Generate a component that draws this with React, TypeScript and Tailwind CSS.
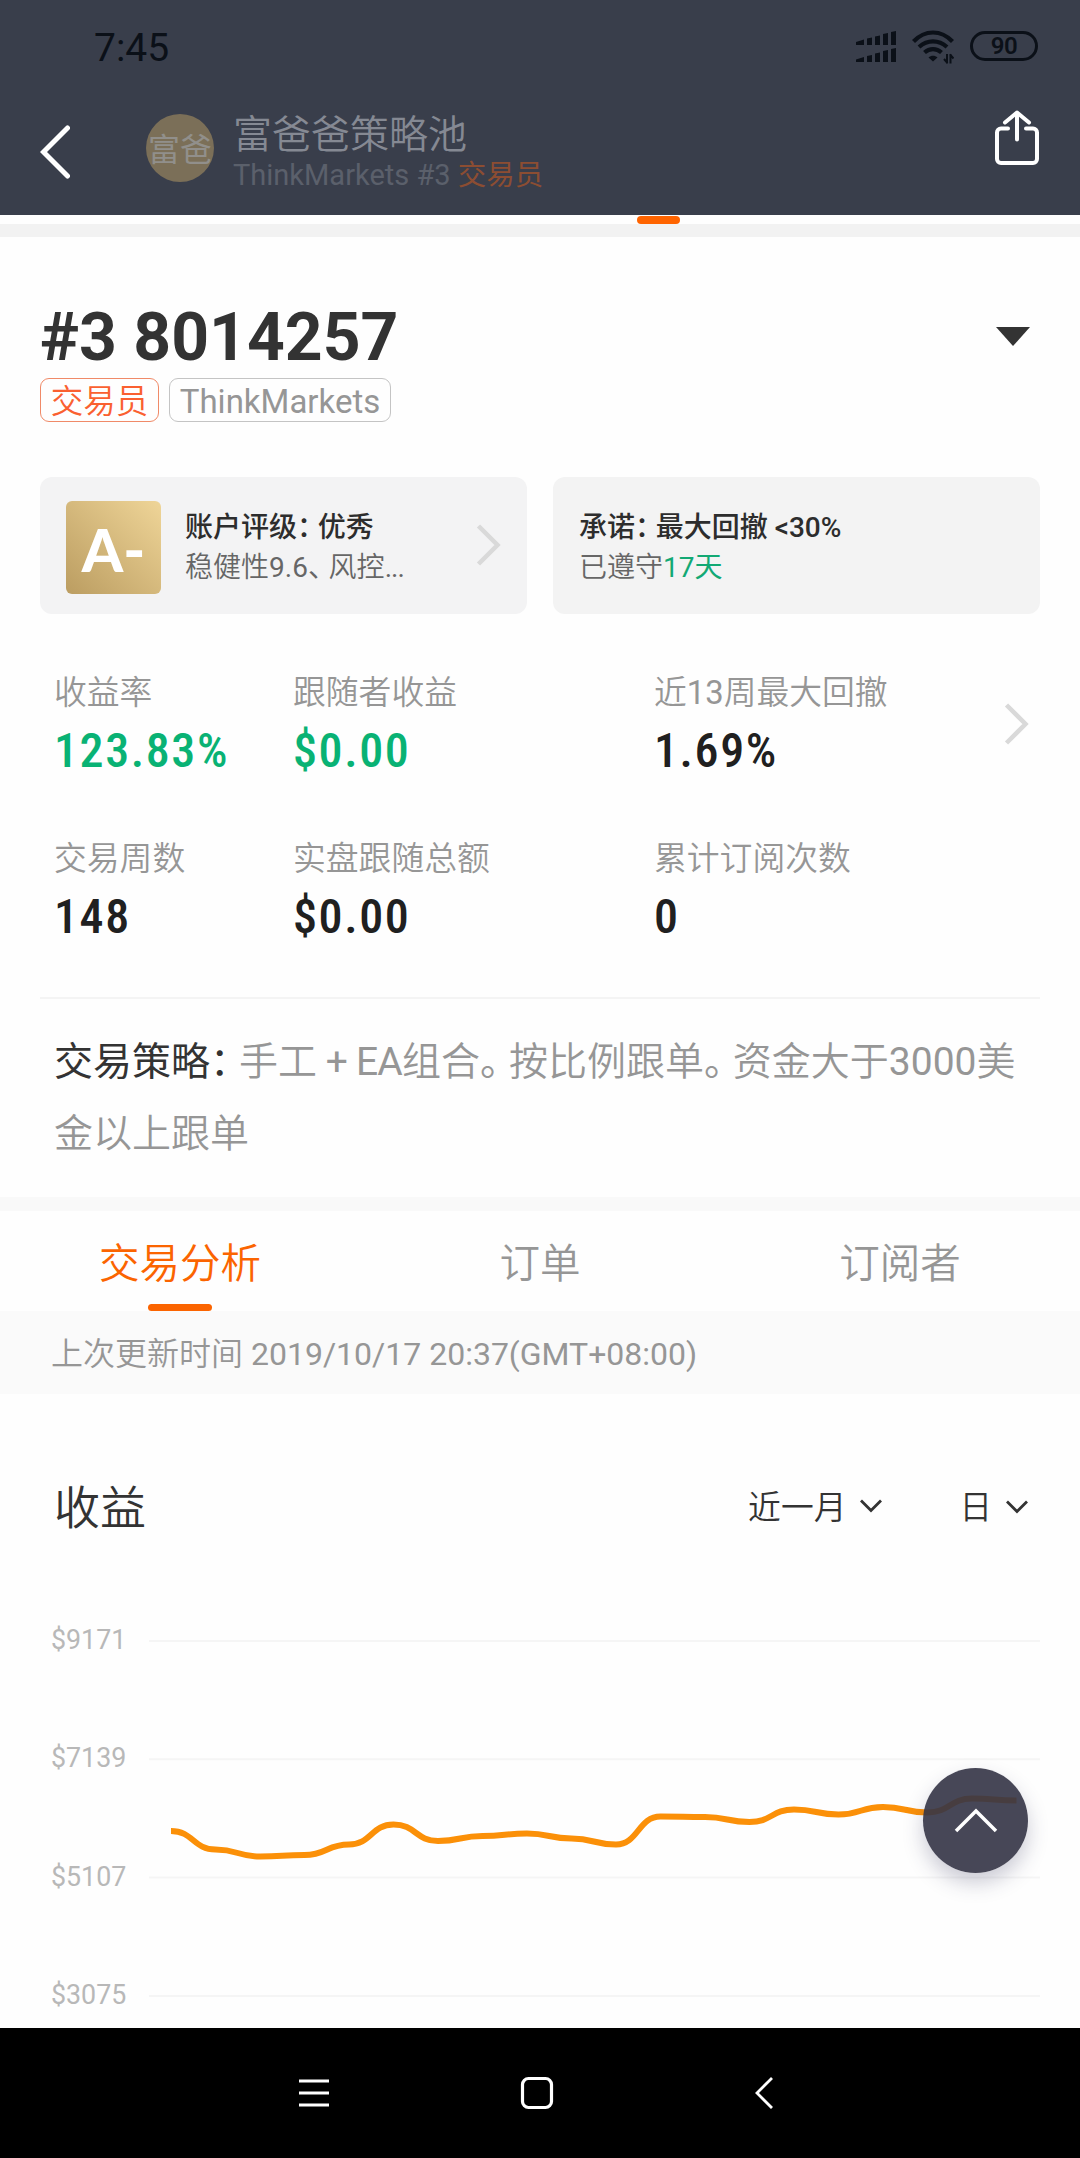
import type { ReactNode } from "react";
import { clsx } from "clsx";

interface Stat {
  label: string;
  value: string;
  positive?: boolean;
}

const STATS: Stat[] = [
  { label: "收益率", value: "123.83%", positive: true },
  { label: "跟随者收益", value: "$0.00", positive: true },
  { label: "近13周最大回撤", value: "1.69%" },
  { label: "交易周数", value: "148" },
  { label: "实盘跟随总额", value: "$0.00" },
  { label: "累计订阅次数", value: "0" },
];

const TABS = ["交易分析", "订单", "订阅者"];

const GRID_LABELS = ["$9171", "$7139", "$5107", "$3075"];

// y positions of the profit curve inside the 891x360 plot
const CURVE = [
  191, 209.5, 216.5, 215, 204.5, 184.5, 201, 196, 193.5, 198.5, 204.5, 176.5,
  177, 182, 169.5, 174.5, 167, 172.5, 158.5, 160.5,
];
const STEP = 44.5;

function curvePath(values: number[]) {
  return values
    .map((y, i) => {
      const x = 22 + i * STEP;
      if (i === 0) return `M${x} ${y}`;
      const mid = x - STEP / 2;
      return `C${mid} ${values[i - 1]} ${mid} ${y} ${x} ${y}`;
    })
    .join(" ");
}

/** Chinese runs get a lighter cut, Latin and digits stay regular. */
function Mixed({ text }: { text: string }) {
  return (
    <>
      {text.split(/([\u4e00-\u9fff]+)/).map((run, i) =>
        i % 2 === 1 ? (
          <span key={i} className="font-[350]">
            {run}
          </span>
        ) : (
          run
        )
      )}
    </>
  );
}

/** Full-width punctuation set on a narrower advance. */
function Punct({ children, className = "mr-[0.24em]" }: { children: ReactNode; className?: string }) {
  return <span className={clsx("[font-feature-settings:'halt']", className)}>{children}</span>;
}

function ChevronRight({ className }: { className?: string }) {
  return (
    <svg viewBox="0 0 25 42" className={clsx("h-[42px] w-[25px]", className)} fill="none">
      <path d="M2.5 2 21.500 21 2.500 40" stroke="#d9d9d9" strokeWidth="4.500" />
    </svg>
  );
}

function ChevronDown() {
  return (
    <svg viewBox="0 0 24 14" className="mt-[-3px] h-[14px] w-6" fill="none">
      <path d="M2 1.500 12 11.500 22 1.500" stroke="#333" strokeWidth="2.800" />
    </svg>
  );
}

function SignalIcon() {
  return (
    <svg viewBox="0 0 40 32" className="h-8 w-10" fill="#0b1018">
      <path d="M0 11 8 8.500V14H0zM11 7.500l5-1V14h-5zM19 5.500l5-1V14h-5zM27 3l5-1v12h-5zM35 1l5-1v14h-5z" />
      <path d="M0 28.500 8 26v5H0zM11 25l5-1v7h-5zM19 22.500l5-1V31h-5zM27 20l5-1v12h-5zM35 18l5-1v14h-5z" />
    </svg>
  );
}

function WifiIcon() {
  return (
    <svg viewBox="0 0 42 34" className="mx-4 h-[34px] w-[42px]" fill="none">
      <g stroke="#0b1018" strokeWidth="4.200">
        <path d="M1.500 11.500C13-.5 29-.5 40.500 11.500" />
        <path d="M7 17c8.500-7.500 19.500-7.500 28 0" />
        <path d="M12.500 22.500c5-4.500 12-4.500 17 0" />
      </g>
      <path d="M16.500 27.500c2.500-2.500 6.500-2.500 9 0L21 31.500z" fill="#0b1018" />
      <path d="M35 24v9.500M35.500 33l-3.500-4M38.500 33.500V24M38 24.500l3.500 4" stroke="#0b1018" strokeWidth="2" />
    </svg>
  );
}

function Header() {
  return (
    <header className="flex h-[215px] flex-col bg-[#393e4b]">
      <div className="flex h-[94px] items-center pr-[42px] pl-[94px]">
        <span className="mt-[2px] text-[39px] leading-none text-[#0b1018]">7:45</span>
        <div className="ml-auto flex items-center">
          <SignalIcon />
          <WifiIcon />
          <div className="mt-[-3px] flex h-[30px] w-[68px] items-center justify-center rounded-full border-[3px] border-[#0b1018] text-[24px] leading-none font-semibold tracking-[-0.5px] text-[#0b1018]">
            90
          </div>
        </div>
      </div>
      <div className="flex flex-1 items-start pr-[40px] pl-[40px]">
        <svg viewBox="0 0 30 54" className="mt-[31px] h-[54px] w-[30px]" fill="none">
          <path d="M27.500 3 3.500 27l24 24" stroke="#fff" strokeWidth="5" strokeLinecap="round" />
        </svg>
        <div className="mt-5 ml-[76px] flex size-[68px] items-center justify-center overflow-hidden rounded-full bg-[#7b6f58] pt-1 text-[32px] leading-none whitespace-nowrap text-[#918f8b]">
          富爸
        </div>
        <div className="mt-[17px] ml-[19px]">
          <h1 className="text-[39px] leading-[48px] font-[350] text-[#858993]">富爸爸策略池</h1>
          <p className="mt-[-1px] text-[29px] leading-[34px] text-[#5b606b]">
            ThinkMarkets #3 <span className="text-[28.500px] text-[#8c4d32]">交易员</span>
          </p>
        </div>
        <svg viewBox="0 0 46 56" className="mt-4 ml-auto h-14 w-[46px]" fill="none">
          <g stroke="#fff" strokeWidth="4" strokeLinecap="round" strokeLinejoin="round">
            <path d="M14 18.500H7a4 4 0 0 0-4 4V49a4 4 0 0 0 4 4h32a4 4 0 0 0 4-4V22.500a4 4 0 0 0-4-4h-7" />
            <path d="M23 29.500V2.500M11 12.500l12-10 12 10" />
          </g>
        </svg>
      </div>
    </header>
  );
}

function AccountCards() {
  return (
    <div className="mt-[55px] grid grid-cols-2 gap-[26px] px-10">
      <div className="flex h-[137px] items-center rounded-xl bg-[#f3f3f4] px-[26px]">
        <div className="mt-[3px] flex h-[93px] w-[95px] items-center justify-center rounded-md bg-linear-to-bl from-[#efd598] to-[#bb9d61] pt-1 font-['Lato','Liberation_Sans',sans-serif] text-[59px] leading-none font-black text-white">
          A-
        </div>
        <div className="mt-[5px] ml-[24px] text-[28px] leading-10">
          <p className="font-medium text-[#2d2d2d]">
            账户评级<Punct>：</Punct>优秀
          </p>
          <p className="text-[#666]">
            <Mixed text="稳健性9.6" />
            <Punct>、</Punct>
            <Mixed text="风控" />
            <span className="tracking-[-1px]">...</span>
          </p>
        </div>
        <ChevronRight className="mt-[-1px] ml-auto" />
      </div>
      <div className="h-[137px] rounded-xl bg-[#f3f3f3] pt-[31px] pl-[26px] text-[28px] leading-10">
        <p className="font-medium text-[#2d2d2d]">
          承诺<Punct>：</Punct>最大回撤 &lt;30%
        </p>
        <p className="text-[#666]">
          <Mixed text="已遵守" />
          <span className="text-[#12a974]">17天</span>
        </p>
      </div>
    </div>
  );
}

function Stats() {
  return (
    <div className="flex h-[383px] pt-[56px] pr-[51px] pl-[54px]">
      <div className="grid flex-1 grid-cols-[239px_361px_1fr] grid-rows-[166px_166px]">
        {STATS.map((stat) => (
          <div key={stat.label}>
            <p className="text-[32.800px] leading-[46px] text-[#969696]">
              <Mixed text={stat.label} />
            </p>
            <p
              className={clsx(
                "mt-[7px] text-[48px] leading-[56px] font-medium tracking-[1.6px] [font-stretch:75%]",
                stat.positive ? "text-[#09b274]" : "text-[#202020]"
              )}
            >
              {stat.value}
            </p>
          </div>
        ))}
      </div>
      <ChevronRight className="mt-[33px]" />
    </div>
  );
}

function Tabs() {
  return (
    <nav className="grid h-[100px] grid-cols-3">
      {TABS.map((tab, i) => (
        <button
          key={tab}
          type="button"
          className={clsx(
            "flex flex-col items-center text-[40.500px] leading-[60px] font-[350]",
            i === 0 ? "text-[#fb6400]" : "text-[#969696]"
          )}
        >
          <span className="mt-[23px]">{tab}</span>
          {i === 0 && <span className="mt-[10px] h-[7px] w-16 rounded-full bg-[#fb6400]" />}
        </button>
      ))}
    </nav>
  );
}

function Strategy() {
  return (
    <div className="h-[198px] pt-[27px] pl-[54px] text-[39px] leading-[72px] whitespace-nowrap text-[#969696]">
      <p>
        <span className="text-[#333]">
          交易策略<Punct>：</Punct>
        </span>
        <Mixed text="手工" />
        <span className="tracking-[-0.8px]"> + EA</span>
        <Mixed text="组合" />
        <Punct>。</Punct>
        <Mixed text="按比例跟单" />
        <Punct>。</Punct>
        <Mixed text="资金大于3000美" />
      </p>
      <p>
        <Mixed text="金以上跟单" />
      </p>
    </div>
  );
}

function ProfitChart() {
  return (
    <div className="mt-[80px] flex pl-[51px]">
      <div className="flex w-[98px] flex-col text-[26.800px] leading-[36px] text-[#b8b8b8]">
        {GRID_LABELS.map((label) => (
          <span key={label} className="h-[118.300px]">
            {label}
          </span>
        ))}
      </div>
      <svg viewBox="0 0 891 360" className="mt-[18px] h-[360px] w-[891px]" fill="none">
        {GRID_LABELS.map((label, i) => (
          <line
            key={label}
            x1="0"
            x2="891"
            y1={1 + i * 118.3}
            y2={1 + i * 118.3}
            stroke="#f5f5f5"
            strokeWidth="2"
          />
        ))}
        <path d={curvePath(CURVE)} stroke="#fb9008" strokeWidth="6" />
      </svg>
    </div>
  );
}

export default function App() {
  return (
    <div className="relative flex h-[2158px] w-[1080px] flex-col overflow-hidden bg-[#fefefe] font-['Roboto','Noto_Sans_CJK_SC',sans-serif]">
      <Header />
      <div className="h-[9px] pt-px pl-[637px]">
        <div className="h-2 w-[43px] rounded-full bg-[#ff6400]" />
      </div>
      <div className="h-[13px] bg-[#f2f2f2]" />

      <section className="pt-[60px]">
        <div className="flex items-center px-10">
          <h2 className="text-[66px] leading-[81px] font-bold text-[#333]">#3 8014257</h2>
          <svg viewBox="0 0 34 19" className="mt-[-3px] mr-[10px] ml-auto h-[19px] w-[34px]">
            <path d="M0 0h34L17 19z" fill="#333" />
          </svg>
        </div>
        <div className="flex gap-[10px] px-10">
          <span className="flex h-11 w-[119px] items-center justify-center rounded-[9px] border border-[#f08a68] pt-[5px] text-[32.500px] leading-none font-[350] text-[#fa6030]">
            交易员
          </span>
          <span className="flex h-11 w-[222px] items-center justify-center rounded-[9px] border border-[#c4c4c4] pt-[2px] text-[33px] leading-none text-[#969696]">
            ThinkMarkets
          </span>
        </div>
        <AccountCards />
        <Stats />
      </section>

      <div className="mx-10 h-[2px] bg-[#f4f4f4]" />
      <Strategy />

      <div className="h-[14px] bg-[#f9f9f9]" />
      <Tabs />
      <p className="h-[83px] bg-[#fafafa] pl-[51px] text-[32px] leading-[86px] text-[#969696]">
        <Mixed text="上次更新时间 2019/10/17 20:37(GMT+08:00)" />
      </p>

      <section>
        <div className="mt-[78px] flex h-[70px] items-center pt-[2px] pr-[51px] pl-[54px] font-[350] text-[#333]">
          <h3 className="text-[46px] leading-none">收益</h3>
          <button type="button" className="ml-auto flex items-center gap-[13px] text-[32.800px] leading-none">
            近一月 <ChevronDown />
          </button>
          <button type="button" className="ml-[76px] flex items-center gap-[13px] text-[32.500px] leading-none">
            日 <ChevronDown />
          </button>
        </div>
        <ProfitChart />
      </section>

      <button
        type="button"
        aria-label="回到顶部"
        className="absolute top-[1768px] left-[923px] flex size-[105px] items-center justify-center rounded-full bg-[#353546]/91 shadow-[0_10px_20px_rgba(53,53,90,0.25)]"
      >
        <svg viewBox="0 0 44 26" className="h-[26px] w-11" fill="none">
          <path d="M2 23 22 3l20 20" stroke="#fff" strokeWidth="3.500" />
        </svg>
      </button>

      <footer className="absolute inset-x-0 bottom-0 flex h-[130px] items-center bg-black pl-[299px]">
        <svg viewBox="0 0 30 32" className="h-8 w-[30px]" stroke="#fff" strokeWidth="2.800">
          <path d="M0 4h30M0 16h30M0 28h30" />
        </svg>
        <svg viewBox="0 0 34 34" className="ml-[191px] size-[34px]" fill="none">
          <rect x="2.500" y="2.500" width="29" height="29" rx="6" stroke="#fff" strokeWidth="3.200" />
        </svg>
        <svg viewBox="0 0 18 34" className="ml-[201px] h-[34px] w-[18px]" fill="none">
          <path d="M17 2 2 17l15 15" stroke="#fff" strokeWidth="2.800" />
        </svg>
      </footer>
    </div>
  );
}
